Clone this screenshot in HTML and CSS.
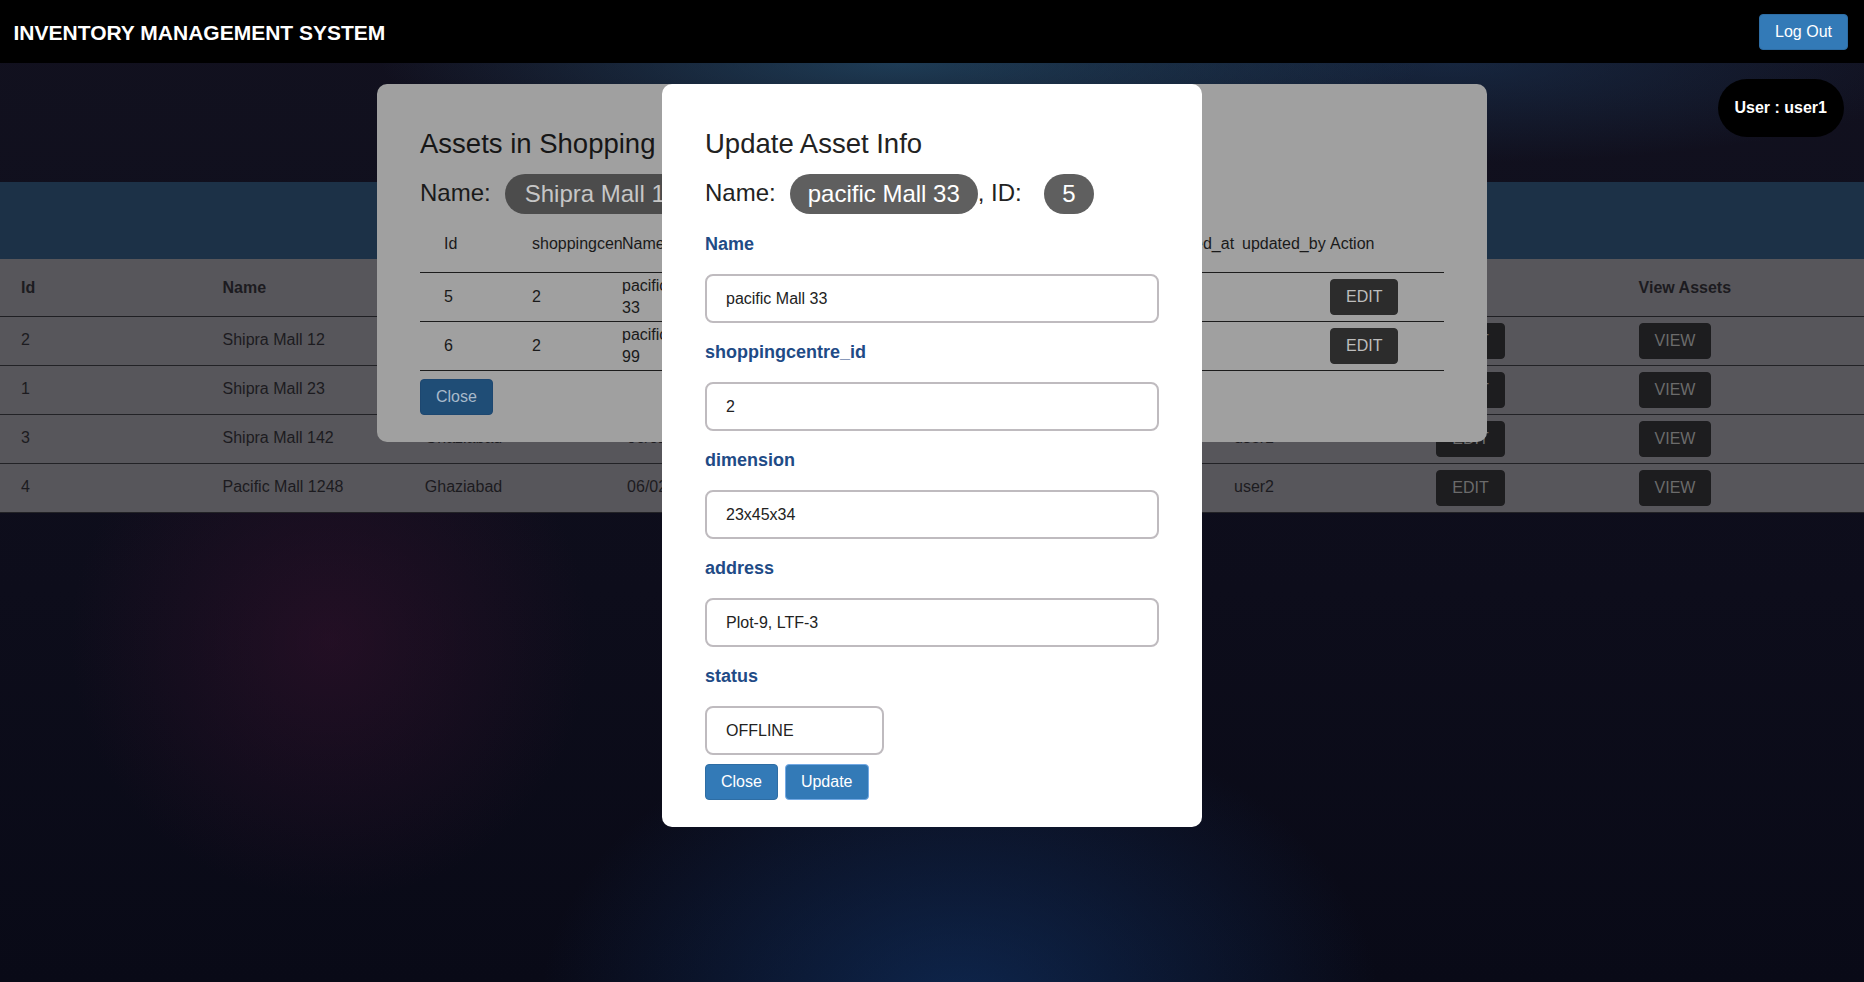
FILE: index.html
```html
<!DOCTYPE html>
<html lang="en">
<head>
<meta charset="utf-8">
<title>Inventory Management System</title>
<link rel="stylesheet" href="styles.css">
</head>
<body>
<header class="navbar">
  <div class="brand">INVENTORY MANAGEMENT SYSTEM</div>
  <button class="btn btn-primary">Log Out</button>
</header>

<main class="page">
  <div class="hero">
    <div class="user-badge">User : user1</div>
  </div>
  <div class="band"></div>
  <table class="centres">
    <colgroup>
      <col class="c-first"><col class="c-mid"><col class="c-mid"><col class="c-mid"><col class="c-mid"><col class="c-mid"><col class="c-mid"><col class="c-mid"><col>
    </colgroup>
    <thead>
      <tr><th>Id</th><th>Name</th><th>Location</th><th>created_at</th><th>created_by</th><th>updated_at</th><th>updated_by</th><th>Edit</th><th>View Assets</th></tr>
    </thead>
    <tbody>
      <tr><td>2</td><td>Shipra Mall 12</td><td>Ghaziabad</td><td>06/02/2021</td><td>user1</td><td>06/02/2021</td><td>user1</td><td><button class="btn btn-dark">EDIT</button></td><td><button class="btn btn-dark">VIEW</button></td></tr>
      <tr><td>1</td><td>Shipra Mall 23</td><td>Ghaziabad</td><td>06/02/2021</td><td>user1</td><td>06/02/2021</td><td>user1</td><td><button class="btn btn-dark">EDIT</button></td><td><button class="btn btn-dark">VIEW</button></td></tr>
      <tr><td>3</td><td>Shipra Mall 142</td><td>Ghaziabad</td><td>06/02/2021</td><td>user1</td><td>06/02/2021</td><td>user1</td><td><button class="btn btn-dark">EDIT</button></td><td><button class="btn btn-dark">VIEW</button></td></tr>
      <tr><td>4</td><td>Pacific Mall 1248</td><td>Ghaziabad</td><td>06/02/2021</td><td>user2</td><td>06/02/2021</td><td>user2</td><td><button class="btn btn-dark">EDIT</button></td><td><button class="btn btn-dark">VIEW</button></td></tr>
    </tbody>
  </table>
</main>

<div class="modal modal-assets">
  <h3>Assets in Shopping Centre</h3>
  <div class="meta">Name:<span class="pill pill-dim">Shipra Mall 12</span></div>
  <table class="assets">
    <colgroup>
      <col class="a1"><col class="a2"><col class="a3"><col class="a4"><col class="a4"><col class="a4"><col class="a5"><col class="a3"><col class="a3"><col class="a3"><col class="a6">
    </colgroup>
    <thead>
      <tr><th>Id</th><th>shoppingcentre_id</th><th>Name</th><th>dimension</th><th>address</th><th>status</th><th>created_at</th><th>created_by</th><th>updated_at</th><th>updated_by</th><th>Action</th></tr>
    </thead>
    <tbody>
      <tr><td>5</td><td>2</td><td class="wrap">pacific Mall 33</td><td>23x45x34</td><td>Plot-9</td><td>OFFLINE</td><td>06/02</td><td>user1</td><td></td><td></td><td class="act"><button class="btn btn-dim">EDIT</button></td></tr>
      <tr><td>6</td><td>2</td><td class="wrap">pacific Mall 99</td><td>12x30x20</td><td>Plot-4</td><td>ONLINE</td><td>06/02</td><td>user1</td><td></td><td></td><td class="act"><button class="btn btn-dim">EDIT</button></td></tr>
    </tbody>
  </table>
  <button class="btn btn-dim-primary close-assets">Close</button>
</div>

<div class="modal modal-update">
  <h3>Update Asset Info</h3>
  <div class="meta">Name:<span class="pill">pacific Mall 33</span>, ID:<span class="pill pill-id">5</span></div>
  <form class="fields">
    <div class="field">
      <label>Name</label>
      <input type="text" value="pacific Mall 33">
    </div>
    <div class="field">
      <label>shoppingcentre_id</label>
      <input type="text" value="2">
    </div>
    <div class="field">
      <label>dimension</label>
      <input type="text" value="23x45x34">
    </div>
    <div class="field">
      <label>address</label>
      <input type="text" value="Plot-9, LTF-3">
    </div>
    <div class="field">
      <label>status</label>
      <input type="text" class="input-short" value="OFFLINE">
    </div>
  </form>
  <div class="actions">
    <button class="btn btn-primary">Close</button>
    <button class="btn btn-primary btn-focus">Update</button>
  </div>
</div>
</body>
</html>
```

FILE: styles.css
```css
html, body {
  margin: 0;
  height: 100%;
}
body {
  font-family: "Liberation Sans", Arial, sans-serif;
  font-size: 16px;
  line-height: 1.42857;
  color: #222;
  overflow: hidden;
  background:
    radial-gradient(ellipse 260px 260px at 330px 640px, rgba(62, 18, 48, 0.45), rgba(0, 0, 0, 0) 100%),
    radial-gradient(ellipse 420px 300px at 960px 1010px, rgba(18, 60, 120, 0.55), rgba(0, 0, 0, 0) 100%),
    radial-gradient(ellipse 520px 90px at 900px 63px, rgba(40, 95, 130, 0.55), rgba(0, 0, 0, 0) 100%),
    radial-gradient(ellipse 500px 100px at 1450px 63px, rgba(30, 70, 110, 0.4), rgba(0, 0, 0, 0) 100%),
    linear-gradient(180deg, #12111f 0%, #0d0d1b 60%, #090a17 100%);
}

/* navbar */
.navbar {
  height: 63px;
  background: #000;
  display: flex;
  align-items: center;
  justify-content: space-between;
  padding: 0 16px 0 13.5px;
}
.brand {
  color: #fff;
  font-weight: bold;
  font-size: 21px;
  line-height: 1;
  padding-top: 2px;
}

/* buttons */
.btn {
  font-family: "Liberation Sans", Arial, sans-serif;
  font-size: 16px;
  line-height: 22px;
  padding: 6px 15px;
  border: 1px solid transparent;
  border-radius: 4px;
  cursor: pointer;
}
.btn-primary {
  background: #337ab7;
  border-color: #2e6da4;
  color: #fff;
}
.btn-focus {
  border-color: #73a9e4;
}
.btn-dark {
  background: #1d1d1f;
  border-color: #1d1d1f;
  color: #6b6b6b;
}
.btn-dim {
  background: #2c2c2c;
  border-color: #2c2c2c;
  color: #bdbdbd;
}
.btn-dim-primary {
  background: #1f4d76;
  border-color: #1d4770;
  color: #a8bacb;
}

/* page */
.hero {
  height: 119px;
  box-sizing: border-box;
  padding: 16px 20px 0;
  display: flex;
  justify-content: flex-end;
  align-items: flex-start;
}
.user-badge {
  background: #000;
  color: #fff;
  font-weight: bold;
  height: 58px;
  line-height: 58px;
  padding: 0 17px;
  border-radius: 29px;
}
.band {
  height: 77px;
  background: #1c3147;
}

.centres {
  width: 100%;
  border-collapse: collapse;
  table-layout: fixed;
  background: #57565b;
  color: #1c1b20;
}
.centres .c-first { width: 201.5px; }
.centres .c-mid { width: 202.3px; }
.centres th {
  text-align: left;
  font-weight: bold;
  padding: 18px 0 16px 21px;
  border-bottom: 1px solid #1f1f23;
  white-space: nowrap;
}
.centres td {
  padding: 6px 0 6px 21px;
  border-bottom: 1px solid #222226;
  vertical-align: middle;
  white-space: nowrap;
  overflow: hidden;
}

/* modals */
.modal {
  position: fixed;
  top: 84px;
  left: 50%;
  transform: translateX(-50%);
  box-sizing: border-box;
  border-radius: 10px;
  padding: 44px 43px 27px;
}
.modal h3 {
  margin: 0;
  font-size: 27.5px;
  font-weight: normal;
  line-height: normal;
  white-space: nowrap;
}
.meta {
  display: flex;
  align-items: center;
  height: 40px;
  margin-top: 13.6px;
  font-size: 24px;
  white-space: nowrap;
}
.pill {
  display: inline-block;
  height: 40px;
  line-height: 40px;
  padding: 0 18px;
  border-radius: 20px;
  background: #5f5f5f;
  color: #fff;
  margin-left: 14px;
}
.pill-id {
  margin-left: 22px;
  padding: 0 18.5px;
}
.pill-dim {
  background: #4c4c4c;
  color: #c6c6c6;
  padding: 0 20px;
}

.modal-assets {
  width: 1110px;
  background: #a0a0a0;
  color: #1a1a1a;
}
.modal-assets h3 { color: #161616; }
.assets {
  width: 100%;
  border-collapse: collapse;
  table-layout: fixed;
  margin-top: 2px;
}
.assets .a1 { width: 112px; }
.assets .a2 { width: 90px; }
.assets .a3 { width: 88px; }
.assets .a4 { width: 90px; }
.assets .a5 { width: 86px; }
.assets .a6 { width: 114px; }
.assets th {
  text-align: left;
  font-weight: normal;
  padding: 17px 0;
  border-bottom: 1px solid #1c1c1c;
  white-space: nowrap;
  overflow: hidden;
}
.assets td {
  padding: 0;
  border-bottom: 1px solid #1c1c1c;
  vertical-align: middle;
  overflow: hidden;
  white-space: nowrap;
}
.assets td.wrap { white-space: normal; }
.assets th:first-child,
.assets td:first-child { padding-left: 24px; }
.assets td.act { padding: 6px 0; }
.close-assets { margin-top: 8px; }

.modal-update {
  width: 540px;
  background: #fff;
  padding-bottom: 27px;
}
.fields {
  margin: 20.7px 0 0;
  display: flex;
  flex-direction: column;
  gap: 19px;
}
.field label {
  display: block;
  font-size: 18px;
  font-weight: bold;
  line-height: 20px;
  color: #1f4b86;
  margin-bottom: 20px;
}
.field input {
  box-sizing: border-box;
  display: block;
  width: 100%;
  height: 49px;
  margin: 0;
  border: 2px solid #bfbbbf;
  border-radius: 8px;
  padding: 0 19px;
  font-family: "Liberation Sans", Arial, sans-serif;
  font-size: 16px;
  color: #222;
  background: #fff;
}
.field .input-short { width: 179px; }
.actions {
  margin-top: 9px;
  display: flex;
  gap: 7px;
}
```
